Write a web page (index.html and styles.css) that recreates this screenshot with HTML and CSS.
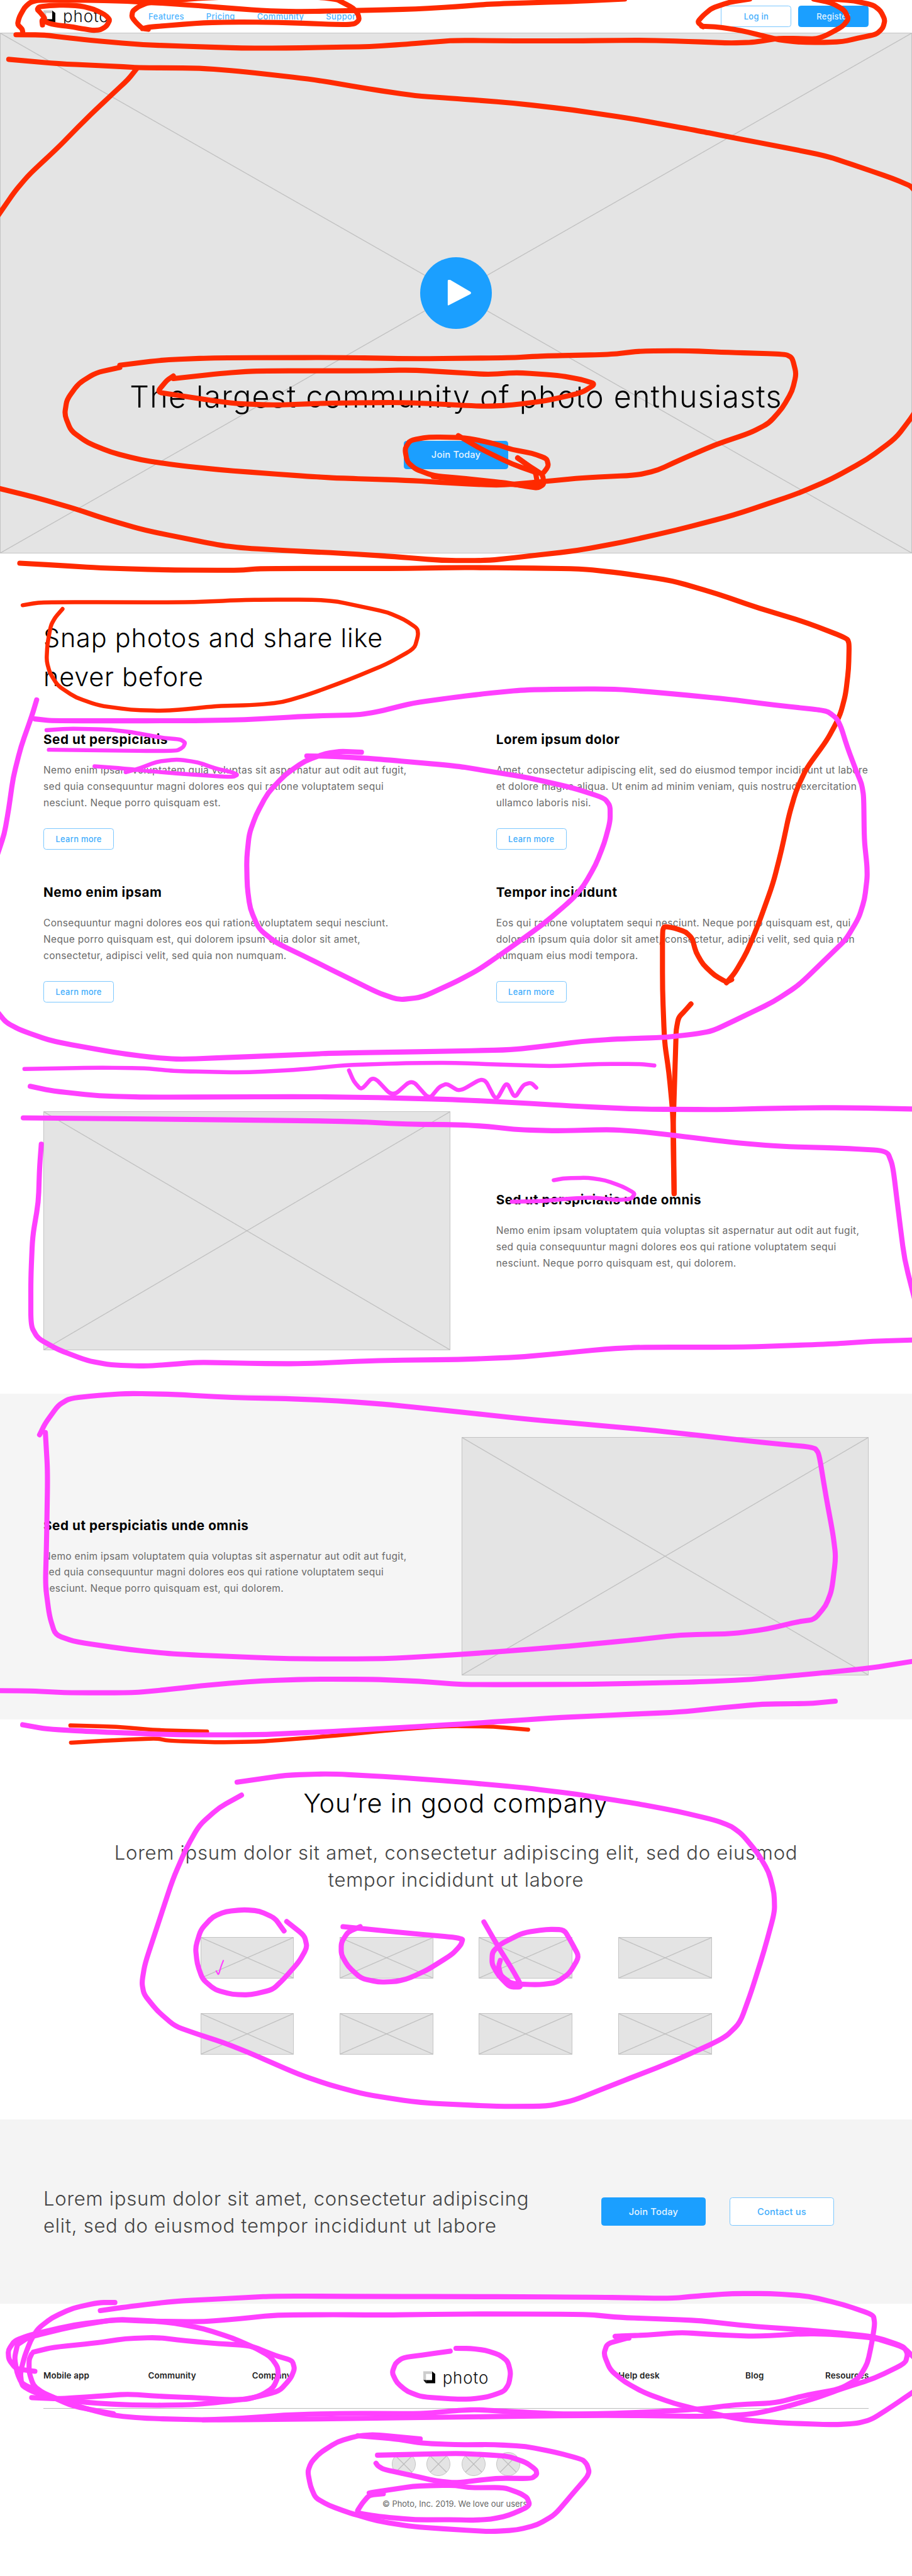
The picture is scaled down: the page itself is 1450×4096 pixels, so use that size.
FILE: index.html
```html
<!DOCTYPE html>
<html lang="en">
<head>
<meta charset="utf-8">
<title>Photo</title>
<link rel="stylesheet" href="styles.css">
</head>
<body>
<div class="page">
  <header class="topbar">
    <div class="logo"><svg class="logo-mark" viewBox="0 0 22 22"><path d="M5 16V22H22V5L16 0V16Z" fill="#000"/><path d="M0 16 5 22V16Z" fill="#000"/><path d="M0 0H16V16H0Z" fill="#ccc"/><path d="M5 5H16V16H5Z" fill="#fff"/></svg><span>photo</span></div>
    <nav class="topnav"><a>Features</a><a>Pricing</a><a>Community</a><a>Support</a></nav>
    <div class="account"><a class="btn outline">Log in</a><a class="btn solid">Register</a></div>
  </header>

  <section class="hero ph">
    <div class="play"><svg viewBox="0 0 44 48"><path d="M2 2V46L42 25.5Q44 24 42 22.5L5 1Q2 0 2 2Z" fill="#fff" stroke="#fff" stroke-width="2" stroke-linejoin="round"/></svg></div>
    <h1>The largest community of photo enthusiasts</h1>
    <a class="btn solid large">Join Today</a>
  </section>

  <section class="features">
    <h2>Snap photos and share like<br>never before</h2>
    <div class="feature-grid">
      <article><h3>Sed ut perspiciatis</h3><p>Nemo enim ipsam voluptatem quia voluptas sit aspernatur aut odit aut fugit,<br>sed quia consequuntur magni dolores eos qui ratione voluptatem sequi<br>nesciunt. Neque porro quisquam est.</p><a class="btn outline">Learn more</a></article>
      <article><h3>Lorem ipsum dolor</h3><p>Amet, consectetur adipiscing elit, sed do eiusmod tempor incididunt ut labore<br>et dolore magna aliqua. Ut enim ad minim veniam, quis nostrud exercitation<br>ullamco laboris nisi.</p><a class="btn outline">Learn more</a></article>
      <article><h3>Nemo enim ipsam</h3><p>Consequuntur magni dolores eos qui ratione voluptatem sequi nesciunt.<br>Neque porro quisquam est, qui dolorem ipsum quia dolor sit amet,<br>consectetur, adipisci velit, sed quia non numquam.</p><a class="btn outline">Learn more</a></article>
      <article><h3>Tempor incididunt</h3><p>Eos qui ratione voluptatem sequi nesciunt. Neque porro quisquam est, qui<br>dolorem ipsum quia dolor sit amet, consectetur, adipisci velit, sed quia non<br>numquam eius modi tempora.</p><a class="btn outline">Learn more</a></article>
    </div>
  </section>

  <section class="media">
    <div class="media-image ph"></div>
    <div><h3>Sed ut perspiciatis unde omnis</h3><p>Nemo enim ipsam voluptatem quia voluptas sit aspernatur aut odit aut fugit,<br>sed quia consequuntur magni dolores eos qui ratione voluptatem sequi<br>nesciunt. Neque porro quisquam est, qui dolorem.</p></div>
  </section>

  <section class="media shaded">
    <div><h3>Sed ut perspiciatis unde omnis</h3><p>Nemo enim ipsam voluptatem quia voluptas sit aspernatur aut odit aut fugit,<br>sed quia consequuntur magni dolores eos qui ratione voluptatem sequi<br>nesciunt. Neque porro quisquam est, qui dolorem.</p></div>
    <div class="media-image ph"></div>
  </section>

  <section class="company">
    <h2>You’re in good company</h2>
    <p class="lead">Lorem ipsum dolor sit amet, consectetur adipiscing elit, sed do eiusmod<br>tempor incididunt ut labore</p>
    <div class="brands"><i class="ph"></i><i class="ph"></i><i class="ph"></i><i class="ph"></i><i class="ph"></i><i class="ph"></i><i class="ph"></i><i class="ph"></i></div>
  </section>

  <section class="cta">
    <p class="lead">Lorem ipsum dolor sit amet, consectetur adipiscing<br>elit, sed do eiusmod tempor incididunt ut labore</p>
    <div class="cta-actions"><a class="btn solid large">Join Today</a><a class="btn outline large">Contact us</a></div>
  </section>

  <footer class="footer">
    <div class="footer-nav"><a>Mobile app</a><a>Community</a><a>Company</a>
      <div class="logo"><svg class="logo-mark" viewBox="0 0 22 22"><path d="M5 16V22H22V5L16 0V16Z" fill="#000"/><path d="M0 16 5 22V16Z" fill="#000"/><path d="M0 0H16V16H0Z" fill="#ccc"/><path d="M5 5H16V16H5Z" fill="#fff"/></svg><span>photo</span></div>
      <a>Help desk</a><a>Blog</a><a>Resources</a></div>
    <div class="social"><i class="ph"></i><i class="ph"></i><i class="ph"></i><i class="ph"></i></div>
    <small>© Photo, Inc. 2019. We love our users.</small>
  </footer>

  <svg class="ink" viewBox="0 0 1680 4747" preserveAspectRatio="none"></svg>
</div>
<script src="ink.js"></script>
</body>
</html>
```
FILE: styles.css
```css
/* 1rem is ten design pixels */
html { font-size: 8.6286px; }
* { box-sizing: border-box; }
body { margin: 0; background: #fff; color: #000; font-family: Inter, "Liberation Sans", sans-serif; font-size: 1.6rem; }
.page { position: relative; height: 474.7rem; overflow: hidden; white-space: nowrap; }
h1, h2, h3, p { margin: 0; }
h1 { font-size: 5.6rem; line-height: 8rem; font-weight: 330; letter-spacing: .026em; margin-right: -.026em; }
h2 { font-size: 4.8rem; line-height: 7.2rem; font-weight: 330; letter-spacing: .019em; }
h3 { font-size: 2.4rem; line-height: 3.6rem; font-weight: 700; letter-spacing: .026em; }
p { font-size: 1.8rem; line-height: 3rem; color: #6a6a6a; margin-top: 2.36rem; letter-spacing: .0205em; }

.ph {
  border: 1px solid #c4c4c4;
  background:
    linear-gradient(to top right, transparent calc(50% - 1.2px), #bcbcbc 50%, transparent calc(50% + 1.2px)),
    linear-gradient(to bottom right, transparent calc(50% - 1.2px), #bcbcbc 50%, transparent calc(50% + 1.2px)),
    #e4e4e4;
}

.btn { display: inline-flex; align-items: center; justify-content: center; width: 13rem; height: 4rem; border: 1px solid #1b9fff; border-radius: .5rem; font-size: 1.5rem; font-weight: 500; letter-spacing: .022em; color: #42adfc; }
.btn.outline { background: #fff; border-color: #7cc8ff; }
.btn.solid { background: #1b9fff; color: #e6f4ff; }
.btn.large { width: 19.2rem; height: 5.2rem; font-size: 1.7rem; letter-spacing: .012em; }

.logo { display: flex; align-items: center; gap: 1.4rem; font-size: 3rem; font-weight: 300; letter-spacing: .035em; color: #111; }
.logo-mark { width: 2.2rem; height: 2.3rem; }

.topbar { height: 6rem; display: flex; align-items: center; padding: 0 8rem; }
.topbar .logo { width: 19.35rem; }
.topnav { display: flex; gap: 4.05rem; font-size: 1.5rem; font-weight: 500; letter-spacing: .03em; color: #4db4ff; }
.account { display: flex; gap: 1.2rem; margin-left: auto; }

.hero { height: 96rem; display: flex; flex-direction: column; align-items: center; padding-top: 41.3rem; }
.play { width: 13.2rem; height: 13.2rem; border-radius: 50%; background: #1b9fff; display: flex; align-items: center; justify-content: center; padding-left: 1.2rem; }
.play svg { width: 4.4rem; height: 4.8rem; }
.hero h1 { margin: 8.5rem 0 4.1rem; }

.features { padding: 11.9rem 8rem 12rem; }
.feature-grid { display: grid; grid-template-columns: 83.4rem 1fr; row-gap: 6.03rem; margin-top: 6.18rem; }
.feature-grid .btn { margin-top: 3.16rem; }
.feature-grid article { height: 22.15rem; }

.media { display: flex; align-items: center; gap: 8.4rem; height: 60rem; padding: 0 8rem; }
.media.shaded { background: #f5f5f5; justify-content: space-between; }
.media-image { width: 75rem; height: 44rem; flex: none; }

.company { height: 73.8rem; padding-top: 11.9rem; text-align: center; }
.lead { font-size: 3.6rem; line-height: 4.95rem; font-weight: 350; letter-spacing: .0235em; color: #444; margin-top: 3.15rem; }
.brands { display: grid; grid-template-columns: repeat(4, 17.25rem); gap: 6.4rem 8.41rem; justify-content: center; margin-top: 8.05rem; }
.brands i { height: 7.6rem; }

.cta { display: flex; align-items: center; justify-content: space-between; height: 33.95rem; padding: 0 14.4rem 0 8rem; background: #f4f4f4; }
.cta .lead { margin: 0; line-height: 5rem; }
.cta-actions { display: flex; gap: 4.45rem; }

.footer { padding: 10.2rem 8rem 0; text-align: center; }
.footer-nav { display: grid; grid-template-columns: 19.3rem 19.15rem 31.5rem 36rem 23.4rem 14.7rem auto; align-items: center; height: 9.15rem; padding-bottom: 2.95rem; border-bottom: .2rem solid #bbb; text-align: left; font-size: 1.55rem; font-weight: 600; letter-spacing: .012em; color: #222; }
.footer-nav .logo { padding-top: .6rem; }
.social { display: flex; justify-content: center; gap: 2.05rem; margin: 8rem 0 3.9rem; }
.social i { width: 4.4rem; height: 4.4rem; border-radius: 50%; }
.footer small { display: block; font-size: 1.5rem; line-height: 2.4rem; color: #666; }

/* hand-drawn markup lying over the page */
.ink { position: absolute; left: 0; top: 0; width: 100%; height: 100%; fill: none; stroke-width: 9.4; stroke-linecap: round; stroke-linejoin: round; }
.ink .red { stroke: #ff2a00; }
.ink .pink { stroke: #ff40ff; }
.ink .medium { stroke-width: 7.5; }
.ink .thin { stroke-width: 2.5; }
```
FILE: ink.js
```js
// Drawing sheets: page offset x, y and units per page pixel. A stroke names its sheet by letter.
const sheets = {
  A: [0, 0, 1.8667, 3], B: [840, 0, 1.8667, 3], C: [0, 420, .9333, 2.529],
  D: [0, 1020, 1.8667, 1.7422], E: [840, 1020, 1.8667, 1.7422], F: [0, 1900, .9333, 2.3758],
  G: [0, 2540, .9333, 2.3059], H: [200, 3220, 1.225, 2.3059],
  J: [0, 4200, 1.8667, 2.9037], K: [840, 4200, 1.8667, 2.9037]
};

const strokes = [
  // header
  ['red', 'A 146,138 144,112 155,103 140,72 128,52 134,38 170,31 220,28 275,32 325,52 362,82 378,110 366,145 345,165 320,168 280,158 240,146 200,140 170,130 146,112'],
  ['red', 'A 78,175 76,160 60,135 66,95 85,40 105,12 130,1 260,1 400,4 520,14 640,26 780,44 900,58 1000,64 1120,62 1280,56 1430,50 1568,37 B 120,22 400,8 580,-5'],
  ['red', 'A 510,162 490,158 470,128 453,95 456,62 475,38 510,14 570,6 700,-12 900,-20 1100,-15 1160,-2 1180,15 1215,45 1232,80 1235,110 1222,130 1200,136 1130,134 1040,128 920,123 800,122 700,126 600,138 510,150 490,158'],
  ['red', 'A 55,192 150,193 280,218 480,247 700,259 830,266 980,266 1150,261 1270,258 1400,244 1500,231 1568,223 B 200,226 400,226 640,222 800,229 940,238 1020,234 1070,222 1110,212 1180,213 1240,216 1280,190 1330,145 1350,105 1335,55 1290,15 1230,-5'],
  ['red', 'B 850,148 830,122 850,85 880,45 940,12 1010,-5'],
  ['red', 'B 845,145 900,149 980,168 1060,200 1110,220 1180,233 1260,235 1330,230 1380,212 1445,190 1468,155 1475,110 1460,60 1435,28 1370,5 1290,-5'],
  // hero
  ['red', 'A 30,328 200,352 400,367 480,374 690,377 840,396 1080,440 1260,490 1430,530 1568,545 B 200,570 400,607 620,660 840,725 940,757 1080,800 1270,860 1400,930 1500,985 1580,1040 1620,1300'],
  ['red', 'C 1590,780 1568,880 1540,980 1490,1080 1430,1170 1370,1240 1260,1340 1160,1410 1070,1465 990,1505 900,1532 840,1550 760,1550 680,1532 580,1515 500,1505 420,1492 380,1480 250,1410 180,1355 130,1310 60,1255 -8,1210'],
  ['red', 'A 470,380 440,440 400,500 330,605 270,700 200,815 100,965 50,1060 -10,1200'],
  ['red', 'C 206,640 280,615 370,605 590,604 710,610 880,605 930,597 1050,590 1100,574 1180,572 1250,580 1350,588 1362,605 1369,680 1362,760 1345,840 1322,910 1290,955 1230,1010 1170,1080 1130,1130 1095,1152 1000,1165 930,1183 860,1200 780,1190 700,1176 580,1166 530,1158 450,1142 380,1128 300,1105 240,1080 190,1045 150,1000 122,945 111,870 115,800 135,725 165,675 206,650'],
  ['red', 'C 298,690 287,710 270,765 300,778 400,818 470,826 570,816 700,813 830,832 880,826 940,805 1000,768 1024,727 1000,707 960,687 890,674 840,683 790,675 710,662 630,666 440,666 380,678 298,702'],
  ['red', 'C 788,968 830,1035 880,1100 932,1150 943,1110 940,1075 915,1050 880,1033 850,1005 800,977 738,974 705,990 696,1030 700,1090 715,1125 745,1155 800,1168 870,1188 905,1205 925,1212 935,1195 933,1150 910,1110 890,1072'],
  ['red', 'C 745,1159 820,1182 880,1195 925,1205 920,1130 890,1072'],
  // features
  ['red medium', 'D 78,166 130,158 200,156 640,157 820,150 900,148 1080,148 1160,154 1250,172 1330,188 1390,212 1435,240 1438,262 1425,305 1330,355 1200,405 1070,450 970,478 880,486 740,490 640,500 560,505 450,502 340,488 260,462 200,425 172,385 160,345 163,290 175,230 190,205 215,178'],
  ['red', 'D 68,31 200,38 340,46 580,53 820,54 900,48 1380,48 1568,45 E 200,46 430,49 560,62 740,86 900,130 1040,175 1200,220 1345,272 1352,290 1350,370 1340,450 1325,505 1310,540 1275,600 1205,690 1170,760 1145,840 1120,950 1090,1060 1040,1190 1000,1280 960,1345 930,1378'],
  ['red', 'E 948,1368 930,1376 890,1355 850,1320 825,1280 812,1235 790,1215 750,1202 716,1197 710,1212 710,1400 717,1568 F 1150,180 1156,340 1158,450 1159,712'],
  ['red', 'E 808,1446 790,1465 765,1490 757,1530 756,1568 F 1160,200 1157,450 1159,712'],
  ['pink', 'D 126,470 110,520 72,620 45,720 30,820 15,900 -10,970'],
  ['pink', 'D -10,1470 20,1505 70,1530 F 90,45 200,95 260,115 310,124 400,115 520,103 570,97 780,88 880,82 940,65 1000,45 1060,35 1140,28 1190,15 1225,0 E 990,1485 1090,1440 1180,1385 1290,1285 1340,1240 1385,1170 1405,1110 1414,1040 1413,1000 1404,920 1402,780 1395,740 1375,695 1345,620 1325,560 1310,530 1280,508 1250,502 1100,487 940,468 740,450 540,434 240,437 100,450 0,461 D 1420,480 1300,508 1230,518 1060,522 840,534 640,537 180,537 120,531'],
  ['pink medium', 'D 160,567 240,562 370,565 450,573 560,592 620,597 637,607 630,622 605,635 168,630'],
  ['pink medium', 'D 325,683 420,690 600,706 800,718 818,710 790,700 740,690 680,670 610,661 540,668 480,690 432,702'],
  ['pink', 'D 1055,650 1150,651 1300,660 1568,682 E 100,697 250,720 400,752 510,785 530,810 530,860 510,930 480,1000 440,1065 400,1110 300,1190 180,1270 80,1335 0,1375 D 1450,1425 1370,1433 1300,1410 1180,1355 1040,1290 950,1250 890,1205 860,1140 850,1070 848,980 857,900 880,840 920,770 980,710 1050,665 1120,642 1170,635 1243,638'],
  // first media row
  ['pink medium', 'F 42,166 170,160 250,163 300,175 420,182 520,168 590,150 700,140 780,139 860,147 950,154 1030,144 1100,144 1125,151'],
  ['pink medium', 'F 600,172 608,220 621,258 642,198 675,287 708,212 738,298 755,245 768,230 790,265 832,202 853,306 871,222 885,294 900,235 913,226 922,248'],
  ['pink', 'F 52,242 90,262 170,284 260,290 520,287 650,291 780,300 880,312 980,328 1100,342 1240,344 1330,338 1450,335 1580,342'],
  ['pink', 'F 40,380 300,386 600,395 700,408 790,410 840,418 890,432 960,437 1050,431 1100,440 1160,457 1260,488 1340,505 1450,513 1525,524 1535,590 1545,800 1555,1000 1575,1200'],
  ['pink', 'F 1580,1352 1500,1358 1430,1370 1280,1384 1100,1384 1040,1392 970,1410 890,1428 790,1438 650,1442 520,1457 430,1455 340,1450 290,1460 250,1467 190,1462 150,1443 100,1395 65,1345 53,1290 53,1080 56,900 66,750 68,600 71,495'],
  ['pink medium', 'F 952,653 970,645 1010,642 1040,653 1070,680 1092,711 1085,735 1062,740 1020,729 980,733 930,745 880,747'],
  // second media row
  ['pink', 'G 68,240 78,190 100,115 120,85 170,72 220,64 300,68 400,82 490,86 580,95 670,112 800,145 900,172 1020,198 1120,220 1240,253 1320,275 1400,293 1408,320 1420,500 1432,660 1437,760 1430,900 1420,965 1400,1025 1370,1035 1320,1065 1260,1085 1170,1090 1090,1112 960,1142 800,1172 660,1192 500,1192 300,1172 220,1152 130,1120 95,1090 85,1010 78,880 80,700 82,400 78,230'],
  ['red medium', 'G 121,1475 200,1480 270,1495 356,1501'],
  ['red medium', 'G 122,1548 200,1537 270,1530 290,1540 380,1547 450,1543 560,1522 680,1493 770,1477 850,1480 908,1493'],
  ['pink', 'G -5,1327 50,1328 120,1336 230,1336 290,1322 370,1300 450,1285 540,1278 640,1279 720,1287 800,1302 1020,1300 1200,1290 1290,1280 1400,1255 1500,1230 1575,1200'],
  ['pink', 'G 39,1472 80,1490 150,1500 300,1515 440,1515 560,1502 680,1485 800,1468 950,1443 1060,1430 1170,1418 1240,1400 1310,1384 1390,1382 1436,1372'],
  // company
  ['pink', 'H 300,203 250,255 205,330 175,430 145,560 110,760 82,920 75,1000 80,1050 110,1120 150,1185 200,1218 260,1255 320,1300 430,1390 500,1435 580,1475 700,1510 880,1526 990,1525 1050,1500 1130,1440 1280,1330 1390,1235 1425,1170 1450,1040 1480,860 1503,700 1502,620 1490,530 1465,450 1430,370 1405,335 1370,310 1280,270 1180,235 1060,200 940,172 800,148 640,126 500,112 400,118 290,148'],
  ['pink', 'H 396,780 375,725 340,695 305,690 265,697 235,720 208,775 196,850 200,920 212,985 240,1030 280,1050 320,1052 370,1030 395,985 430,910 448,850 442,800 402,740'],
  ['pink thin', 'H 243,950 248,968 254,930 259,906'],
  ['pink', 'H 529,762 660,787 800,810 795,840 775,880 720,945 680,980 650,995 610,998 570,982 540,930 525,880 525,830 540,785 568,762'],
  ['pink', 'H 847,742 880,850 910,940 933,1018 905,1018 880,970 865,920 866,870 885,835 935,788 990,773 1028,775 1045,830 1062,890 1040,960 1010,1000 970,1009 910,1005 885,970 880,930 884,905'],
  // footer links
  ['pink', 'J 345,168 450,145 600,118 800,102 950,90 1300,93 1568,93 K 450,96 740,103 830,90 950,77 1080,77 1210,90 1330,135 1435,190 1440,240 1430,340 1415,450 1385,530 1320,588 1200,622 1100,662 960,672 840,695 700,708 520,720 380,722 200,710 70,698 0,703 J 1450,720 1200,718 1000,725 830,745 700,753'],
  ['pink', 'J 120,493 55,480 30,430 28,380 50,330 100,300 250,245 400,217 510,225 700,228 820,212 950,192 1150,190 1300,192 1568,187 K 150,186 450,188 560,205 740,215 840,222 1000,250 1200,272 1300,285 1440,308 1540,360 1553,400 1545,450 1440,530 1320,590 1240,635 1130,685 1020,722 880,735 500,728 0,738 J 900,752 700,753 500,745 390,730 300,695 220,655 150,610 75,560 58,500 50,420 60,350'],
  ['pink', 'J 395,125 340,125 250,155 180,205 130,265 105,330 85,410 70,500 75,570 110,600 170,635 300,660 420,672 540,675 660,672 780,655 870,635 960,600 1000,530 1013,480 1005,435 950,410 860,355 750,345 640,330 540,312 430,318 340,340 180,365 115,390'],
  ['pink', 'J 109,634 200,640 280,632 350,625 440,615 550,627 680,635 780,645 850,643 900,620 940,580 957,520 955,470 930,415 880,370 800,315 700,265 600,235 510,222 400,215 260,250 100,310 60,350'],
  ['pink', 'J 109,400 100,430 100,500 115,570 150,610 250,680 390,720'],
  ['pink', 'J 1548,385 1480,400 1385,420 1360,450 1348,500 1365,555 1400,600 1450,630 1568,642 K 50,642 110,630 165,600 182,560 188,500 178,440 150,405 100,380 50,371 0,370'],
  ['pink', 'K 595,315 535,305 650,300 775,285 900,298 1030,306 1200,292 1300,295 1440,315 1540,365 1575,420'],
  ['pink', 'K 1580,595 1500,680 1430,750 1380,772 1300,779 1130,770 1000,755 930,735 850,705 750,665 650,610 580,550 530,485 508,400 520,345 590,315'],
  // footer credits
  ['pink', 'J 1445,855 1290,832 1230,838 1160,870 1100,930 1070,980 1058,1030 1068,1110 1085,1170 1130,1210 1200,1250 1300,1295 1420,1325 1568,1340 K 120,1351 210,1342 280,1315 340,1260 400,1150 450,1060 458,1030 450,990 435,965 340,925 240,895 130,885 0,886 J 1450,878 1360,855 1230,838'],
  ['pink', 'J 1298,942 1568,932 K 90,938 180,948 240,980 275,1020 278,1045 260,1067 140,1065 0,1090 J 1500,1080 1430,1055 1320,1018 1300,1000 1293,985'],
  ['pink', 'J 1318,1148 1260,1145 1330,1130 1420,1108 1500,1104 1568,1104 K 50,1116 165,1115 220,1145 245,1170 253,1205 240,1225 180,1265 120,1285 50,1290 0,1287 J 1430,1288 1300,1270 1225,1250 1245,1200 1270,1155 1318,1148']
];

function readPoints(text) {
  let sheet;
  const points = [];
  for (const token of text.split(' ')) {
    if (sheets[token]) { sheet = sheets[token]; continue; }
    const [x, y] = token.split(',').map(Number);
    points.push([sheet[0] + x / sheet[2], sheet[1] + y / sheet[3]]);
  }
  return points;
}

// Rounds every corner with a short quadratic, so the line stays smooth without overshoot.
function smooth(p) {
  let d = `M${p[0]}`;
  for (let i = 1; i < p.length - 1; i++) {
    const prev = p[i - 1], cur = p[i], next = p[i + 1];
    const a = [cur[0] + (prev[0] - cur[0]) * .3, cur[1] + (prev[1] - cur[1]) * .3];
    const b = [cur[0] + (next[0] - cur[0]) * .3, cur[1] + (next[1] - cur[1]) * .3];
    d += `L${a}Q${cur} ${b}`;
  }
  return d + `L${p[p.length - 1]}`;
}

const ink = document.querySelector('.ink');
for (const [kind, text] of strokes) {
  const path = document.createElementNS('http://www.w3.org/2000/svg', 'path');
  path.setAttribute('class', kind);
  path.setAttribute('d', smooth(readPoints(text)));
  ink.append(path);
}
```
